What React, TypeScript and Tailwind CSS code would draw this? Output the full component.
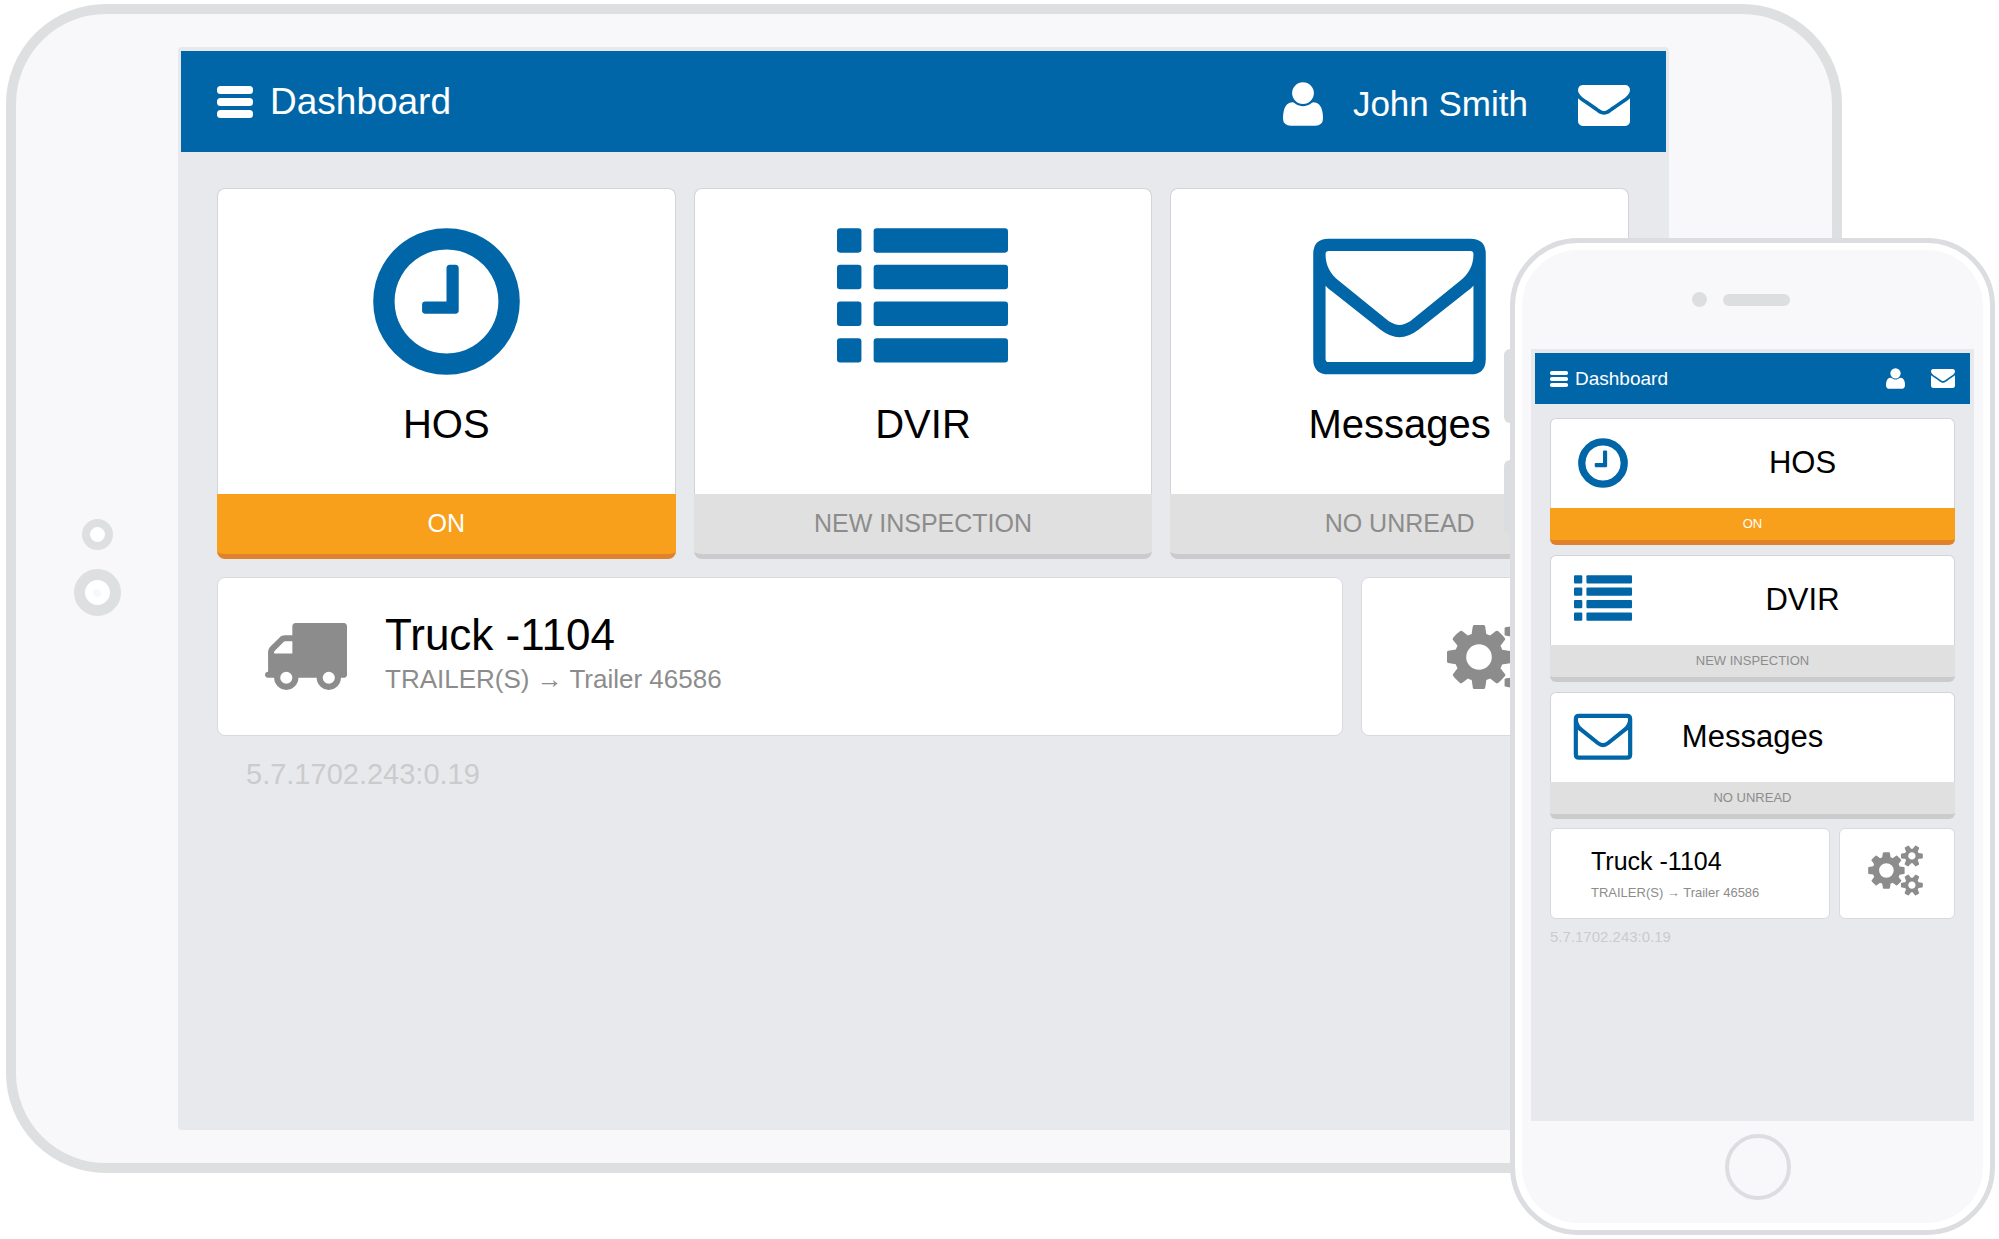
import React from 'react';

interface IconProps {
  className?: string;
}

const BarsIcon: React.FC<IconProps> = ({ className }) => (
  <svg viewBox="0 0 36 32" className={className} fill="currentColor" aria-hidden="true">
    <rect x="0" y="0" width="36" height="8" rx="3.5" />
    <rect x="0" y="12" width="36" height="8" rx="3.5" />
    <rect x="0" y="24" width="36" height="8" rx="3.5" />
  </svg>
);

const UserIcon: React.FC<IconProps> = ({ className }) => (
  <svg viewBox="0 0 1408 1536" className={className} fill="currentColor" aria-hidden="true">
    <path
      transform="translate(0 1408) scale(1 -1)"
      d="M1408 131q0 -120 -73 -189.5t-194 -69.5h-874q-121 0 -194 69.5t-73 189.5q0 53 3.5 103.5t14 109t26.5 108.5t43 97.5t62 81t85.5 53.5t111.5 20q9 0 42 -21.5t74.5 -48t108 -48t133.5 -21.5t133.5 21.5t108 48t74.5 48t42 21.5q61 0 111.5 -20t85.5 -53.5t62 -81t43 -97.5t26.5 -108.5t14 -109t3.5 -103.5zM1088 1024q0 -159 -112.5 -271.5t-271.5 -112.5t-271.5 112.5t-112.5 271.5t112.5 271.5t271.5 112.5t271.5 -112.5t112.5 -271.5z"
    />
  </svg>
);

const MailIcon: React.FC<IconProps> = ({ className }) => (
  <svg viewBox="0 256 1792 1408" className={className} fill="currentColor" aria-hidden="true">
    <path d="M1792 710v794q0 66-47 113t-113 47h-1472q-66 0-113-47t-47-113v-794q44 49 101 87 362 246 497 345 57 42 92.5 65.5t94.5 48 110 24.5h2q51 0 110-24.5t94.5-48 92.5-65.5q170-123 498-345 57-39 100-87zm0-294q0 79-49 151t-122 123q-376 261-468 325-10 7-42.5 31t-54 38.5-52 32.5-57.5 27-50 9h-2q-23 0-50-9t-57.5-27-52-32.5-54-38.5-42.5-31q-91-64-262-182.5t-205-142.5q-62-42-117-115.5t-55-136.5q0-78 41.5-130t118.5-52h1472q65 0 112.5 47t47.5 113z" />
  </svg>
);

const ClockIcon: React.FC<IconProps> = ({ className }) => (
  <svg viewBox="0 0 1792 1792" className={className} fill="currentColor" aria-hidden="true">
    <path d="M1024 544v448q0 14-9 23t-23 9h-320q-14 0-23-9t-9-23v-64q0-14 9-23t23-9h224v-352q0-14 9-23t23-9h64q14 0 23 9t9 23zm416 352q0-148-73-273t-198-198-273-73-273 73-198 198-73 273 73 273 198 198 273 73 273-73 198-198 73-273zm224 0q0 209-103 385.5t-279.5 279.5-385.5 103-385.5-103-279.5-279.5-103-385.5 103-385.5 279.5-279.5 385.5-103 385.5 103 279.5 279.5 103 385.5z" />
  </svg>
);

const ListIcon: React.FC<IconProps> = ({ className }) => (
  <svg viewBox="0 0 1792 1792" className={className} fill="currentColor" aria-hidden="true">
    {[128, 512, 896, 1280].map(y => (
      <g key={y}>
        <rect x="0" y={y} width="256" height="256" rx="32" />
        <rect x="384" y={y} width="1408" height="256" rx="32" />
      </g>
    ))}
  </svg>
);

const EnvelopeIcon: React.FC<IconProps> = ({ className }) => (
  <svg viewBox="8 20 1776 1776" overflow="visible" className={className} fill="currentColor" aria-hidden="true">
    <path
      fillRule="evenodd"
      d="M160 256h1472q160 0 160 160v1088q0 160-160 160h-1472q-160 0-160-160v-1088q0-160 160-160zM160 384h1472q32 0 32 32c0 120-52 206-138 276l-519 422q-62 38-111 38t-111-38l-519-422c-86-70-138-156-138-276q0-32 32-32zM128 744q30 34 69 60l502 398q104 78 197 78t197-78l502-398q39-26 69-60v760q0 32-32 32h-1472q-32 0-32-32z"
    />
  </svg>
);

const TruckIcon: React.FC<IconProps> = ({ className }) => (
  <svg viewBox="0 256 1792 1408" className={className} fill="currentColor" aria-hidden="true">
    <path d="M640 1408q0-52-38-90t-90-38-90 38-38 90 38 90 90 38 90-38 38-90zm-384-512h384v-256h-158q-13 0-22 9l-195 195q-9 9-9 22v30zm1280 512q0-52-38-90t-90-38-90 38-38 90 38 90 90 38 90-38 38-90zm256-1088v1024q0 15-4 26.5t-13.5 18.5-16.5 11.5-23.5 6-22.5 2-25.5 0-22.5-.5q0 106-75 181t-181 75-181-75-75-181h-384q0 106-75 181t-181 75-181-75-75-181h-64q-3 0-22.5.5t-25.5 0-22.5-2-23.5-6-16.5-11.5-13.5-18.5-4-26.5q0-26 19-45t45-19v-320q0-8-.5-35t0-38 2.5-34.5 6.5-37 14-30.5 22.5-30l198-198q19-19 50.5-32t58.5-13h160v-192q0-26 19-45t45-19h1024q26 0 45 19t19 45z" />
  </svg>
);

const CogsIcon: React.FC<IconProps> = ({ className }) => (
  <svg viewBox="0 0 1920 1792" className={className} fill="currentColor" aria-hidden="true">
    <path d="M896 896q0-106-75-181t-181-75-181 75-75 181 75 181 181 75 181-75 75-181zm768 512q0-52-38-90t-90-38-90 38-38 90q0 53 37.5 90.5t90.5 37.5 90.5-37.5 37.5-90.5zm0-1024q0-52-38-90t-90-38-90 38-38 90q0 53 37.5 90.5t90.5 37.5 90.5-37.5 37.5-90.5zm-384 421v185q0 10-7 19.5t-16 10.5l-155 24q-11 35-32 76 34 48 90 115 7 11 7 20 0 12-7 19-23 30-82.5 89.5t-78.5 59.5q-11 0-21-7l-115-90q-37 19-77 31-11 108-23 155-7 24-30 24h-186q-11 0-20-7.5t-10-17.5l-23-153q-34-10-75-31l-118 89q-7 7-20 7-11 0-21-8-144-133-144-160 0-9 7-19 10-14 41-53t47-61q-23-44-35-82l-152-24q-10-1-17-9.5t-7-19.5v-185q0-10 7-19.5t16-10.5l155-24q11-35 32-76-34-48-90-115-7-11-7-20 0-12 7-20 22-30 82-89t79-59q11 0 21 7l115 90q34-18 77-32 11-108 23-154 7-24 30-24h186q11 0 20 7.5t10 17.5l23 153q34 10 75 31l118-89q8-7 20-7 11 0 21 8 144 133 144 160 0 8-7 19-12 16-42 54t-45 60q23 48 34 82l152 23q10 2 17 10.5t7 19.5zm640 533v140q0 16-149 31-12 27-30 52 51 113 51 138 0 4-4 7-122 71-124 71-8 0-46-47t-52-68q-20 2-30 2t-30-2q-14 21-52 68t-46 47q-2 0-124-71-4-3-4-7 0-25 51-138-18-25-30-52-149-15-149-31v-140q0-16 149-31 13-29 30-52-51-113-51-138 0-4 4-7 4-2 35-20t59-34 30-16q8 0 46 46.5t52 67.5q20-2 30-2t30 2q51-71 92-112l6-2q4 0 124 70 4 3 4 7 0 25-51 138 17 23 30 52 149 15 149 31zm0-1024v140q0 16-149 31-12 27-30 52 51 113 51 138 0 4-4 7-122 71-124 71-8 0-46-47t-52-68q-20 2-30 2t-30-2q-14 21-52 68t-46 47q-2 0-124-71-4-3-4-7 0-25 51-138-18-25-30-52-149-15-149-31v-140q0-16 149-31 13-29 30-52-51-113-51-138 0-4 4-7 4-2 35-20t59-34 30-16q8 0 46 46.5t52 67.5q20-2 30-2t30 2q51-71 92-112l6-2q4 0 124 70 4 3 4 7 0 25-51 138 17 23 30 52 149 15 149 31z" />
  </svg>
);

interface TileData {
  id: string;
  title: string;
  status: string;
  active: boolean;
  icon: React.FC<IconProps>;
  phoneIconClass: string;
  phoneTitleClass: string;
}

const tiles: TileData[] = [
  { id: 'hos', title: 'HOS', status: 'ON', active: true, icon: ClockIcon, phoneIconClass: '', phoneTitleClass: '' },
  { id: 'dvir', title: 'DVIR', status: 'NEW INSPECTION', active: false, icon: ListIcon, phoneIconClass: '', phoneTitleClass: '' },
  { id: 'messages', title: 'Messages', status: 'NO UNREAD', active: false, icon: EnvelopeIcon, phoneIconClass: 'mb-1', phoneTitleClass: 'pr-25' },
];

const version = '5.7.1702.243:0.19';

const statusColors = (active: boolean) =>
  active ? 'bg-[#f8a01b] border-[#e0822b] text-white' : 'bg-[#e0e0e0] border-[#cbcbce] text-[#8c8c8c]';

const TabletTile: React.FC<{ tile: TileData }> = ({ tile }) => (
  <button className="flex flex-col text-center">
    <span className="flex w-full flex-col items-center gap-[13px] rounded-t-lg border border-b-0 border-[#d3d4d8] bg-white pt-[27px] pb-[46px]">
      <tile.icon className="size-[171px] text-[#0066a8]" />
      <span className="text-[40px] leading-12 text-black">{tile.title}</span>
    </span>
    <span className={`w-full rounded-b-lg border-b-[5px] pt-[13px] pb-[15px] text-[25px] leading-8 ${statusColors(tile.active)}`}>
      {tile.status}
    </span>
  </button>
);

const PhoneTile: React.FC<{ tile: TileData }> = ({ tile }) => (
  <button className="flex flex-col text-center">
    <span className="flex h-[90px] w-full items-center rounded-t-md border border-b-0 border-[#d3d4d8] bg-white pb-0.5">
      <span className={`ml-1 flex w-24 justify-center ${tile.phoneIconClass}`}>
        <tile.icon className="size-[58px] text-[#0066a8]" />
      </span>
      <span className={`flex-1 text-[31px] leading-10 text-black ${tile.phoneTitleClass}`}>{tile.title}</span>
    </span>
    <span className={`w-full rounded-b-md border-b-[5px] py-2 text-[13px] leading-4 ${statusColors(tile.active)}`}>
      {tile.status}
    </span>
  </button>
);

const Tablet: React.FC = () => (
  <section
    aria-label="Tablet"
    className="mt-1 mr-[157px] ml-1.5 flex rounded-[100px] border-10 border-[#dddfe0] bg-[#f8f8fa] py-[33px] pr-[163px]"
  >
    <div className="flex w-[162px] shrink-0 flex-col items-center justify-center gap-[19px] pb-[42px]">
      <div className="size-[31px] rounded-full border-8 border-[#dddfe0] bg-white" />
      <div className="flex size-[47px] items-center justify-center rounded-full border-[11px] border-[#dddfe0] bg-white">
        <div className="size-2 rounded-full bg-[#f8f8fa]" />
      </div>
    </div>

    <div className="min-h-[1083px] flex-1 rounded-sm bg-[#e8e9ed] px-[3px] pt-1">
      <header className="flex h-[101px] items-center justify-between bg-[#0066a8] px-9 text-white">
        <button className="flex items-center gap-[17px] text-[37px] leading-12">
          <BarsIcon className="h-8 w-9" />
          Dashboard
        </button>
        <div className="flex items-center pt-1">
          <button className="flex items-center gap-[30px] text-[35px] leading-12">
            <UserIcon className="h-11 w-10" />
            John Smith
          </button>
          <button aria-label="Messages" className="ml-[50px] pt-1">
            <MailIcon className="h-[41px] w-[52px]" />
          </button>
        </div>
      </header>

      <main className="pt-9 pr-[37px] pl-9">
        <div className="grid grid-cols-3 gap-[18px]">
          {tiles.map(tile => (
            <TabletTile key={tile.id} tile={tile} />
          ))}
        </div>
        <div className="mt-[18px] flex gap-[18px]">
          <button className="flex h-[159px] flex-1 items-center gap-[38px] rounded-lg border border-[#d9dade] bg-white pl-11 text-left">
            <TruckIcon className="h-[67px] w-[85px] text-[#8c8c8c]" />
            <span className="flex flex-col gap-1 pb-2">
              <span className="text-[44px] leading-12 text-black">Truck -1104</span>
              <span className="text-[26px] leading-8 text-[#8c8c8c]">TRAILER(S) → Trailer 46586</span>
            </span>
          </button>
          <button
            aria-label="Settings"
            className="flex w-[268px] items-center justify-center rounded-lg border border-[#d9dade] bg-white"
          >
            <CogsIcon className="h-[90px] w-24 text-[#8c8c8c]" />
          </button>
        </div>
        <p className="mt-5 pl-[29px] text-[29px] leading-9 text-[#cbcbce]">{version}</p>
      </main>
    </div>
  </section>
);

const Phone: React.FC = () => (
  <section
    aria-label="Phone"
    className="absolute top-[238px] right-1 w-[485px] rounded-[68px] border-5 border-[#dcdde0] bg-white p-[7px]"
  >
    {/* volume keys */}
    <div className="absolute top-[106px] -left-[11px] h-[74px] w-1.5 rounded-l-md bg-[#dcdde0]" />
    <div className="absolute top-[217px] -left-[11px] h-[74px] w-1.5 rounded-l-md bg-[#dcdde0]" />

    <div className="rounded-[56px] bg-[#f8f8fa] px-[9px]">
      <div className="flex h-[99px] items-center justify-center gap-4 pr-6">
        <div className="size-[15px] rounded-full bg-[#dddee0]" />
        <div className="h-3 w-[67px] rounded-full bg-[#dddee0]" />
      </div>

      <div className="min-h-[772px] bg-[#e8e9ed] p-1">
        <header className="flex h-[51px] items-center justify-between bg-[#0066a8] px-[15px] text-white">
          <button className="flex items-center gap-[7px] text-[19px] leading-6">
            <BarsIcon className="h-4 w-[18px]" />
            Dashboard
          </button>
          <div className="flex items-center gap-[26px]">
            <button aria-label="John Smith">
              <UserIcon className="h-[21px] w-[19px]" />
            </button>
            <button aria-label="Messages">
              <MailIcon className="h-[19px] w-6" />
            </button>
          </div>
        </header>

        <main className="px-[15px] pt-3.5">
          <div className="flex flex-col gap-2.5">
            {tiles.map(tile => (
              <PhoneTile key={tile.id} tile={tile} />
            ))}
          </div>
          <div className="mt-[9px] flex gap-[9px]">
            <button className="flex h-[91px] flex-1 flex-col justify-center gap-2.5 rounded-md border border-[#d9dade] bg-white pl-10 text-left">
              <span className="text-[25px] leading-7 text-black">Truck -1104</span>
              <span className="text-[13px] leading-4 text-[#8c8c8c]">TRAILER(S) → Trailer 46586</span>
            </button>
            <button
              aria-label="Settings"
              className="flex w-[116px] items-center justify-center rounded-md border border-[#d9dade] bg-white pr-1 pb-1.5"
            >
              <CogsIcon className="h-[51px] w-[55px] text-[#8c8c8c]" />
            </button>
          </div>
          <p className="mt-2 text-[15px] leading-5 text-[#cbcbce]">{version}</p>
        </main>
      </div>

      <div className="flex h-[102px] justify-center pt-[13px] pl-2.5">
        <button aria-label="Home" className="size-[66px] rounded-full border-4 border-[#dcdde0]" />
      </div>
    </div>
  </section>
);

export default function App() {
  return (
    <div className="relative flow-root min-h-screen bg-white font-['Liberation_Sans',Arial,sans-serif]">
      <Tablet />
      <Phone />
    </div>
  );
}
